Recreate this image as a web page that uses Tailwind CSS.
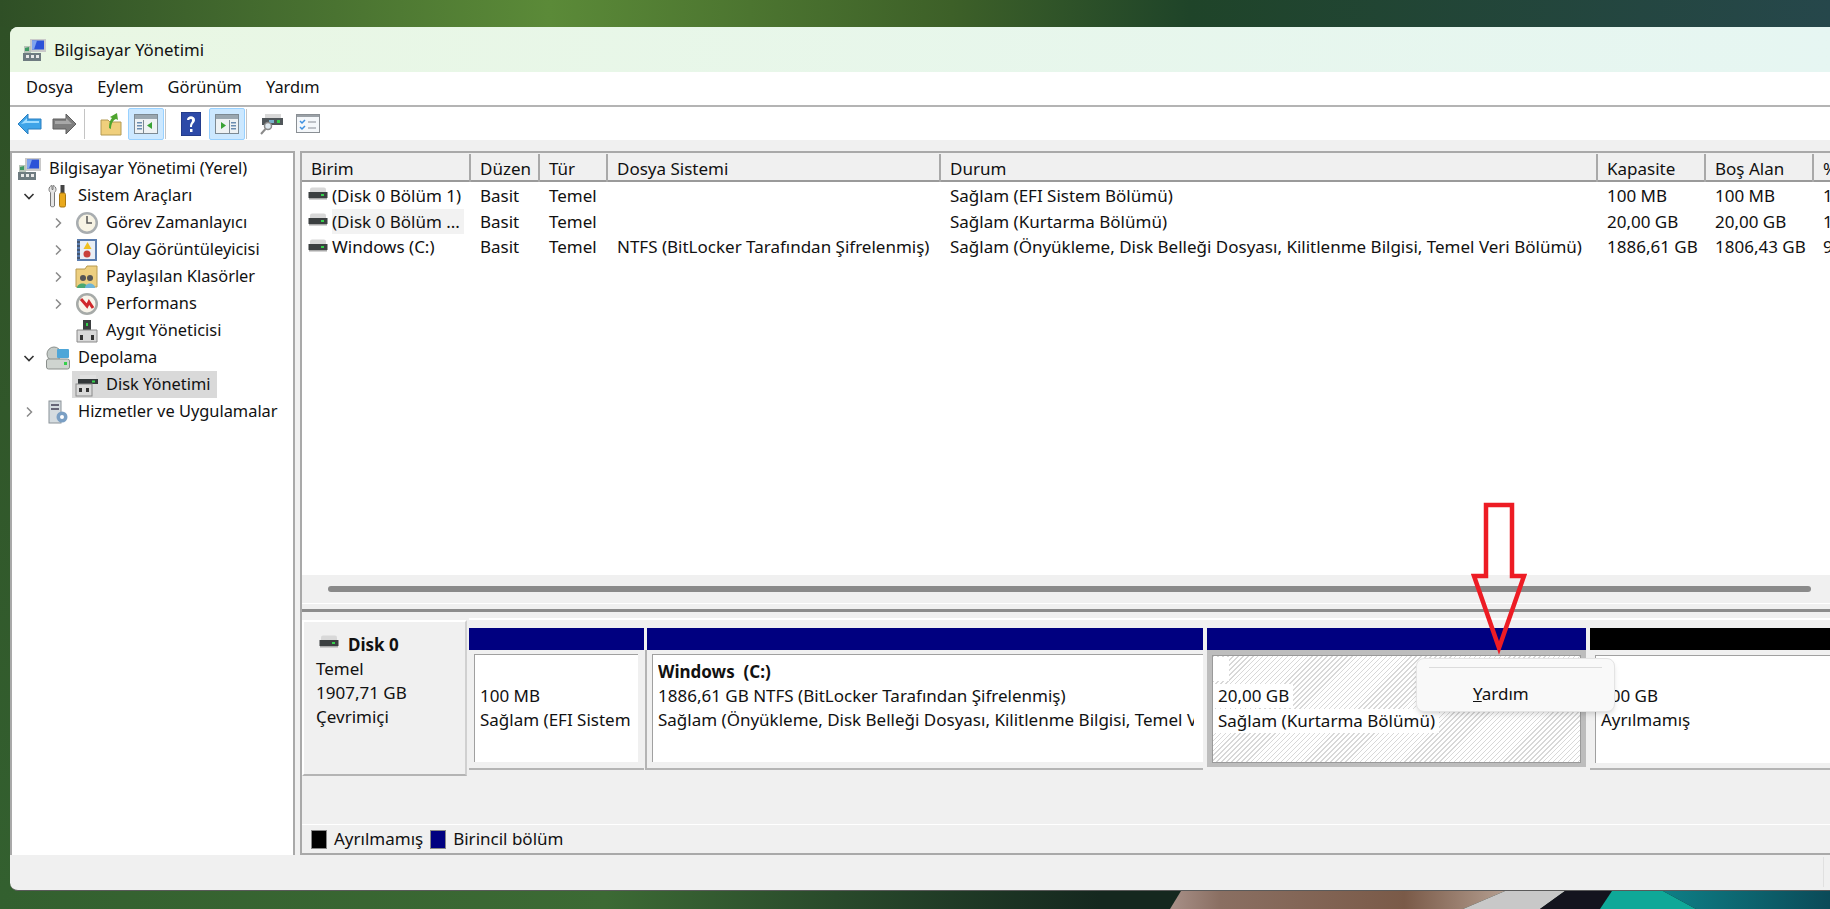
<!DOCTYPE html>
<html lang="tr">
<head>
<meta charset="UTF-8">
<title>Bilgisayar Yönetimi</title>
<script src="https://cdn.jsdelivr.net/npm/@tailwindcss/browser@4"></script>
</head>
<body class="w-[1830px] h-[909px] overflow-hidden font-['Noto_Sans',sans-serif] text-[17px] text-[#111] relative">
<svg class="hidden">
  <symbol id="i-comp" viewBox="0 0 24 24">
    <rect x="8" y="1" width="16" height="13" fill="#c9c9c9"/><rect x="10" y="2.5" width="12" height="9" fill="#2b52d8"/><path d="M10 2.5h5l-3 9h-2z" fill="#7fa3ee"/>
    <path d="M2 8h7v7H2z" fill="#b9c4b9"/><path d="M3 10l4-1v4H3z" fill="#3d9a63"/>
    <rect x="1" y="15" width="18" height="8" fill="#6e7b80"/><rect x="4" y="17" width="3" height="3" fill="#e8e8e8"/><rect x="9" y="17" width="3" height="3" fill="#e8e8e8"/><rect x="14" y="17" width="3" height="3" fill="#e8e8e8"/>
  </symbol>
  <symbol id="i-disk" viewBox="0 0 20 14">
    <path d="M2 2.5Q2 0.5 4 0.5h12q2 0 2 2v3H2z" fill="#d8d8d8"/><rect x="0.5" y="5" width="19" height="6" fill="#3b3f40"/><rect x="13" y="7" width="3" height="2" fill="#35d04c"/><rect x="1" y="11" width="18" height="1.5" fill="#a8a8a8"/>
  </symbol>
  <symbol id="i-diskman" viewBox="0 0 24 24">
    <path d="M5 2h16v5H5z" fill="#e0e0e0"/><rect x="3" y="6" width="20" height="5" fill="#33383a"/><rect x="17" y="7.5" width="3" height="2" fill="#35d04c"/>
    <rect x="1" y="11" width="16" height="12" fill="#d9d9d9" stroke="#8a8a8a"/><rect x="4" y="15" width="3" height="4" fill="#333"/><rect x="11" y="15" width="3" height="4" fill="#333"/>
  </symbol>
  <symbol id="i-chev" viewBox="0 0 12 12"><path d="M4 1.5l4.5 4.5L4 10.5" fill="none" stroke="#8a8a8a" stroke-width="1.5"/></symbol>
  <symbol id="i-chevd" viewBox="0 0 12 12"><path d="M1.5 4l4.5 4.5L10.5 4" fill="none" stroke="#333" stroke-width="1.6"/></symbol>
</svg>

<!-- masaüstü üst -->
<div class="h-[27px] bg-[linear-gradient(90deg,#2f4f26_0,#5b8a38_30%,#3d6028_52%,#1f4429_65%,#26474b_100%)]"></div>

<div class="flex h-[864px] bg-gradient-to-b from-[#2f5026] to-[#33602f]">
  <div class="w-[10px]"></div>
  <!-- pencere -->
  <div class="flex-1 flex flex-col bg-[#f0f0f0] rounded-l-lg overflow-hidden border-b border-[#5a5a5a]">
    <!-- başlık -->
    <div class="h-[45px] flex items-center pl-[12px] bg-gradient-to-r from-[#e9f7e3] to-[#e6f6f2] shrink-0">
      <svg class="w-[24px] h-[24px]"><use href="#i-comp"/></svg>
      <span class="ml-[8px] text-[16.8px]">Bilgisayar Yönetimi</span>
    </div>
    <!-- menü -->
    <div class="h-[35px] flex items-center gap-[24px] pl-[16px] pb-[2px] bg-white border-b-2 border-[#b4b4b4] shrink-0 text-[16.4px]">
      <span>Dosya</span><span>Eylem</span><span>Görünüm</span><span>Yardım</span>
    </div>
    <!-- araç çubuğu -->
    <div class="h-[33px] flex items-center bg-white shrink-0">
      <svg class="ml-[7px] w-[25px] h-[22px]" viewBox="0 0 25 22"><path d="M1 11L11 1v5h13v10H11v5z" fill="#3fa4e8" stroke="#2a7fc0"/><path d="M4 11l6-6v3h12v2H9z" fill="#9fdcff"/></svg>
      <svg class="ml-[10px] w-[25px] h-[22px]" viewBox="0 0 25 22"><path d="M24 11L14 1v5H1v10h13v5z" fill="#7f7f7f" stroke="#5f5f5f"/><path d="M3 8h11V5l6 6H3z" fill="#a8a8a8"/></svg>
      <div class="ml-[7px] w-[1px] h-[30px] bg-[#c4c4c4]"></div>
      <svg class="ml-[15px] w-[22px] h-[24px]" viewBox="0 0 22 24"><path d="M1 8h7l2 2h11v13H1z" fill="#f0cf7c" stroke="#b49a52"/><path d="M9 16c0-5 1-8 3-10l-2-1 7-4 1 7-2-1c-3 1-5 5-5 10z" fill="#4fa52f"/></svg>
      <div class="ml-[6px] w-[36px] h-[32px] bg-[#cce8ff] border border-[#99d1ff] rounded-[2px] flex items-center justify-center">
        <svg class="w-[24px] h-[20px]" viewBox="0 0 24 20"><rect x="0.5" y="0.5" width="23" height="19" fill="#eef2f4" stroke="#7d8a93"/><rect x="1" y="1" width="22" height="4" fill="#9aa7b0"/><rect x="3" y="8" width="5" height="1.5" fill="#6a8cb0"/><rect x="3" y="11" width="5" height="1.5" fill="#6a8cb0"/><rect x="3" y="14" width="5" height="1.5" fill="#6a8cb0"/><path d="M9.5 6v13" stroke="#7d8a93"/><path d="M18 8v7l-5-3.500z" fill="#3aa335"/></svg>
      </div>
      <div class="ml-[1px] w-[1px] h-[30px] bg-[#c4c4c4]"></div>
      <svg class="ml-[15px] w-[20px] h-[24px]" viewBox="0 0 20 24"><rect width="20" height="24" fill="#2d4aa8"/><rect x="0" y="0" width="20" height="24" fill="none" stroke="#1d2f70"/><path d="M6 8c0-5 8-5 8 0 0 3-3 3-3 7H9c0-5 2-4 2-7 0-1.500-2-1.500-3 0zM9 17h2.500v3H9z" fill="#fff"/></svg>
      <div class="ml-[8px] w-[36px] h-[32px] bg-[#cce8ff] border border-[#99d1ff] rounded-[2px] flex items-center justify-center">
        <svg class="w-[24px] h-[20px]" viewBox="0 0 24 20"><rect x="0.5" y="0.5" width="23" height="19" fill="#eef2f4" stroke="#7d8a93"/><rect x="1" y="1" width="22" height="4" fill="#9aa7b0"/><rect x="16" y="8" width="5" height="1.5" fill="#6a8cb0"/><rect x="16" y="11" width="5" height="1.5" fill="#6a8cb0"/><rect x="16" y="14" width="5" height="1.5" fill="#6a8cb0"/><path d="M14.500 6v13" stroke="#7d8a93"/><path d="M6 8v7l5-3.500z" fill="#3aa335"/></svg>
      </div>
      <div class="ml-[1px] w-[1px] h-[30px] bg-[#c4c4c4]"></div>
      <svg class="ml-[13px] w-[24px] h-[22px]" viewBox="0 0 24 22"><path d="M5 1h16v4H5z" fill="#d8d8d8"/><rect x="2" y="5" width="21" height="7" fill="#50565a"/><rect x="17" y="7" width="3" height="3" fill="#35d04c"/><rect x="9" y="7" width="5" height="3" fill="#7ab2cc"/><circle cx="8" cy="13" r="3.500" fill="#dfe9f0" stroke="#8a8a8a" stroke-width="1.500"/><path d="M5.500 16L1 21" stroke="#8a8a8a" stroke-width="2"/></svg>
      <svg class="ml-[12px] w-[24px] h-[19px]" viewBox="0 0 24 19"><rect x="0.500" y="0.500" width="23" height="18" fill="#f4f7fa" stroke="#8a8f94"/><rect x="1" y="1" width="22" height="2" fill="#9aa0a6"/><path d="M4 7l2 2 3-3M4 13l2 2 3-3" fill="none" stroke="#3b8fe0" stroke-width="1.500"/><path d="M12 8h8M12 14h8" stroke="#aab0b6" stroke-width="1.500"/></svg>
    </div>
    <!-- gövde -->
    <div class="flex-1 min-h-0 flex pt-[11px] gap-[5px]">
      <!-- ağaç -->
      <div class="w-[285px] h-[704px] bg-white border-2 border-[#a9a9a9] border-b-0 pt-[2px] shrink-0 text-[16.4px]">
        <div class="h-[27px] flex items-center pl-[5px]"><svg class="w-[24px] h-[24px]"><use href="#i-comp"/></svg><span class="ml-[8px]">Bilgisayar Yönetimi (Yerel)</span></div>
        <div class="h-[27px] flex items-center pl-[11px]"><svg class="w-[12px] h-[12px]"><use href="#i-chevd"/></svg>
          <svg class="ml-[11px] w-[24px] h-[24px]" viewBox="0 0 24 24"><path d="M6 1.500c-2 .5-3 2-3 4 0 1.500 1 2.500 1.500 3V22c0 1 4 1 4 0V8.500c.5-.5 1.500-1.500 1.500-3 0-2-1-3.500-3-4v4H6z" fill="#e4e4e4" stroke="#777"/><rect x="14.500" y="1" width="4" height="8" fill="#444"/><rect x="13.500" y="9" width="6" height="14" rx="1.500" fill="#e9a91c" stroke="#a87710"/></svg>
          <span class="ml-[8px]">Sistem Araçları</span></div>
        <div class="h-[27px] flex items-center pl-[40px]"><svg class="w-[12px] h-[12px]"><use href="#i-chev"/></svg>
          <svg class="ml-[11px] w-[24px] h-[24px]" viewBox="0 0 24 24"><circle cx="12" cy="12" r="11" fill="#a8adb0"/><circle cx="12" cy="12" r="8.500" fill="#f7f3e4"/><path d="M12 5v7h5" fill="none" stroke="#555" stroke-width="1.500"/></svg>
          <span class="ml-[7px]">Görev Zamanlayıcı</span></div>
        <div class="h-[27px] flex items-center pl-[40px]"><svg class="w-[12px] h-[12px]"><use href="#i-chev"/></svg>
          <svg class="ml-[11px] w-[24px] h-[24px]" viewBox="0 0 24 24"><rect x="2" y="1" width="20" height="22" fill="#5a7db0"/><rect x="5" y="3" width="15" height="18" fill="#e9eef5"/><path d="M2 4h3M2 8h3M2 12h3M2 16h3M2 20h3" stroke="#333"/><path d="M12.500 4l4 7h-8z" fill="#f0c020"/><circle cx="12" cy="16" r="3.500" fill="#c8403c"/></svg>
          <span class="ml-[7px]">Olay Görüntüleyicisi</span></div>
        <div class="h-[27px] flex items-center pl-[40px]"><svg class="w-[12px] h-[12px]"><use href="#i-chev"/></svg>
          <svg class="ml-[11px] w-[24px] h-[24px]" viewBox="0 0 24 24"><path d="M1 4h9l2-3h10v21H1z" fill="#edcf80" stroke="#b89a50"/><circle cx="8" cy="13" r="3" fill="#555"/><circle cx="15" cy="13" r="3" fill="#555"/><path d="M2 23c0-6 11-6 11 0z" fill="#4aa873"/><path d="M10 23c0-6 10-6 10 0z" fill="#6fb5d8"/></svg>
          <span class="ml-[7px]">Paylaşılan Klasörler</span></div>
        <div class="h-[27px] flex items-center pl-[40px]"><svg class="w-[12px] h-[12px]"><use href="#i-chev"/></svg>
          <svg class="ml-[11px] w-[24px] h-[24px]" viewBox="0 0 24 24"><circle cx="12" cy="12" r="11" fill="#a6aaa8"/><circle cx="12" cy="12" r="8.500" fill="#f8f4ea"/><path d="M6 7l6 7 2-4 4 6" fill="none" stroke="#d0282c" stroke-width="3"/></svg>
          <span class="ml-[7px]">Performans</span></div>
        <div class="h-[27px] flex items-center pl-[63px]">
          <svg class="w-[24px] h-[24px]" viewBox="0 0 24 24"><rect x="8" y="1" width="8" height="10" fill="#3b3f40"/><rect x="11" y="4" width="2" height="3" fill="#35d04c"/><path d="M2 11h20v12H2z" fill="#d9d9d9" stroke="#8a8a8a"/><rect x="5" y="16" width="3" height="5" fill="#333"/><rect x="16" y="16" width="3" height="5" fill="#333"/></svg>
          <span class="ml-[7px]">Aygıt Yöneticisi</span></div>
        <div class="h-[27px] flex items-center pl-[11px]"><svg class="w-[12px] h-[12px]"><use href="#i-chevd"/></svg>
          <svg class="ml-[11px] w-[24px] h-[24px]" viewBox="0 0 24 24"><circle cx="8" cy="8" r="7" fill="#c4cbc8" stroke="#8a8f8c"/><rect x="11" y="3" width="12" height="9" rx="1" fill="#4ea6d8"/><rect x="0.500" y="13" width="23" height="10" rx="2" fill="#cfd4d0" stroke="#8a8f8c"/><rect x="18" y="16" width="3" height="3" fill="#35d04c"/></svg>
          <span class="ml-[8px]">Depolama</span></div>
        <div class="h-[27px] flex items-center pl-[60px]">
          <div class="h-[27px] flex items-center pl-[3px] pr-[6px] bg-[#d9d9d9]"><svg class="w-[24px] h-[24px]"><use href="#i-diskman"/></svg><span class="ml-[7px]">Disk Yönetimi</span></div></div>
        <div class="h-[27px] flex items-center pl-[11px]"><svg class="w-[12px] h-[12px]"><use href="#i-chev"/></svg>
          <svg class="ml-[11px] w-[24px] h-[24px]" viewBox="0 0 24 24"><rect x="3" y="1" width="12" height="22" fill="#d5dce0" stroke="#8a9298"/><rect x="5" y="4" width="8" height="2" fill="#667"/><rect x="5" y="8" width="8" height="2" fill="#667"/><circle cx="16" cy="17" r="5.500" fill="#7a9fc4"/><circle cx="16" cy="17" r="2" fill="#fff"/></svg>
          <span class="ml-[8px]">Hizmetler ve Uygulamalar</span></div>
      </div>
      <!-- sağ panel -->
      <div class="flex-1 min-w-0 h-[704px] flex flex-col border-l-2 border-t-2 border-[#a9a9a9]">
        <!-- liste -->
        <div class="h-[422px] bg-white shrink-0">
          <div class="h-[29px] grid grid-cols-[169px_69px_68px_333px_657px_108px_108px_16px] bg-[#f0f0f0] border-b-2 border-[#9a9a9a] pt-[1px]">
            <div class="pl-[9px] pt-[2px] border-r-2 border-[#a9a9a9]">Birim</div>
            <div class="pl-[9px] pt-[2px] border-r-2 border-[#a9a9a9]">Düzen</div>
            <div class="pl-[9px] pt-[2px] border-r-2 border-[#a9a9a9]">Tür</div>
            <div class="pl-[9px] pt-[2px] border-r-2 border-[#a9a9a9]">Dosya Sistemi</div>
            <div class="pl-[9px] pt-[2px] border-r-2 border-[#a9a9a9]">Durum</div>
            <div class="pl-[9px] pt-[2px] border-r-2 border-[#a9a9a9]">Kapasite</div>
            <div class="pl-[9px] pt-[2px] border-r-2 border-[#a9a9a9]">Boş Alan</div>
            <div class="pl-[9px] pt-[2px]">%</div>
          </div>
          <div class="mt-[1px] grid grid-cols-[169px_69px_68px_333px_657px_108px_108px_16px] auto-rows-[25.7px] items-center whitespace-nowrap">
            <div class="flex items-center pl-[6px]"><svg class="w-[20px] h-[14px] -mt-[3px]"><use href="#i-disk"/></svg><span class="ml-[4px]">(Disk 0 Bölüm 1)</span></div>
            <div class="pl-[9px]">Basit</div><div class="pl-[9px]">Temel</div><div class="pl-[9px]"></div>
            <div class="pl-[9px]">Sağlam (EFI Sistem Bölümü)</div>
            <div class="pl-[9px]">100 MB</div><div class="pl-[9px]">100 MB</div><div class="pl-[9px] overflow-hidden">1</div>

            <div class="flex items-center pl-[6px]"><svg class="w-[20px] h-[14px] -mt-[3px]"><use href="#i-disk"/></svg><span class="ml-[4px] bg-[#f2f2f2] pr-[4px] leading-[25px]">(Disk 0 Bölüm ...</span></div>
            <div class="pl-[9px]">Basit</div><div class="pl-[9px]">Temel</div><div class="pl-[9px]"></div>
            <div class="pl-[9px]">Sağlam (Kurtarma Bölümü)</div>
            <div class="pl-[9px]">20,00 GB</div><div class="pl-[9px]">20,00 GB</div><div class="pl-[9px] overflow-hidden">1</div>

            <div class="flex items-center pl-[6px]"><svg class="w-[20px] h-[14px] -mt-[3px]"><use href="#i-disk"/></svg><span class="ml-[4px]">Windows (C:)</span></div>
            <div class="pl-[9px]">Basit</div><div class="pl-[9px]">Temel</div>
            <div class="pl-[9px]">NTFS (BitLocker Tarafından Şifrelenmiş)</div>
            <div class="pl-[9px]">Sağlam (Önyükleme, Disk Belleği Dosyası, Kilitlenme Bilgisi, Temel Veri Bölümü)</div>
            <div class="pl-[9px]">1886,61 GB</div><div class="pl-[9px]">1806,43 GB</div><div class="pl-[9px] overflow-hidden">9</div>
          </div>
        </div>
        <!-- kaydırma çubuğu -->
        <div class="h-[28px] flex items-center pl-[26px] pr-[19px] shrink-0">
          <div class="h-[6px] w-full rounded-full bg-[#8a8a8a]"></div>
        </div>
        <div class="h-[9px] border-t border-white border-b-[3px] border-b-[#8c8c8c] shrink-0"></div>
        <!-- disk alanı -->
        <div class="flex-1 min-h-0 flex pt-[8px] items-start overflow-hidden">
          <div class="w-[165px] h-[156px] shrink-0 border-t-2 border-l-2 border-white border-b-2 border-b-[#b4b4b4] border-r-2 border-r-[#d0d0d0] pl-[12px] pt-[11px] leading-[24px]">
            <div class="flex items-center font-bold"><svg class="ml-[3px] w-[20px] h-[14px] -mt-[6px] mr-[9px]"><use href="#i-disk"/></svg>Disk 0</div>
            <div>Temel</div><div>1907,71 GB</div><div>Çevrimiçi</div>
          </div>
          <div class="flex h-[152px] pt-[8px] border-t-2 border-white ml-[2px] -mt-[2px] flex-1 min-w-0 gap-[3px]">
            <div class="w-[175px] shrink-0 flex flex-col">
              <div class="h-[22px] bg-[#000080] shrink-0"></div>
              <div class="h-[120px] pt-[4px] pl-[5px] pr-[6px] border-b-2 border-[#b4b4b4]">
                <div class="h-[108px] bg-white border-l border-t border-[#a0a0a0] pl-[5px] pt-[29px] leading-[24px] whitespace-nowrap overflow-hidden">100 MB<br>Sağlam (EFI Sistem</div>
              </div>
            </div>
            <div class="w-[556px] shrink-0 flex flex-col">
              <div class="h-[22px] bg-[#000080] shrink-0"></div>
              <div class="h-[120px] pt-[4px] pl-[5px] border-b-2 border-l-2 border-[#b4b4b4] -ml-[2px]">
                <div class="h-[108px] bg-white border-l border-t border-[#a0a0a0] pl-[5px] pr-[9px] pt-[5px] leading-[24px]">
                  <div class="whitespace-nowrap overflow-hidden"><b>Windows&nbsp; (C:)</b><br>1886,61 GB NTFS (BitLocker Tarafından Şifrelenmiş)<br>Sağlam (Önyükleme, Disk Belleği Dosyası, Kilitlenme Bilgisi, Temel Veri Bölümü)</div>
                </div>
              </div>
            </div>
            <div class="w-[379px] ml-[1px] shrink-0 flex flex-col">
              <div class="h-[22px] bg-[#000080] shrink-0"></div>
              <div class="h-[117px] bg-[#bdbdbd] px-[5px] pt-[5px]">
                <div class="h-[108px] border border-[#9a9a9a] bg-[repeating-linear-gradient(135deg,#d8d8d8_0,#d8d8d8_1px,#fff_1px,#fff_3.500px)] leading-[24px] whitespace-nowrap">
                  <div class="h-[24px] w-[16px] bg-white mt-[1px]"></div>
                  <div class="h-[3px]"></div>
                  <div class="w-fit bg-white pl-[5px] pr-[4px]">20,00 GB</div>
                  <div class="w-fit bg-white pl-[5px] pr-[4px] mt-[1px]">Sağlam (Kurtarma Bölümü)</div>
                </div>
              </div>
            </div>
            <div class="w-[240px] ml-[1px] shrink-0 flex flex-col">
              <div class="h-[22px] bg-black shrink-0"></div>
              <div class="h-[120px] pt-[5px] pl-[5px] border-b-2 border-[#b4b4b4]">
                <div class="h-[108px] bg-white border-l border-t border-[#a0a0a0] pl-[5px] pt-[28px] leading-[24px] whitespace-nowrap">100 GB<br>Ayrılmamış</div>
              </div>
            </div>
          </div>
        </div>
        <!-- gösterge -->
        <div class="h-[31px] shrink-0 border-t border-white border-b-2 border-b-[#a9a9a9] flex items-center pl-[9px]">
          <span class="w-[16px] h-[19px] bg-black border border-[#888]"></span><span class="ml-[7px]">Ayrılmamış</span>
          <span class="ml-[7px] w-[16px] h-[19px] bg-[#000080] border border-[#888]"></span><span class="ml-[7px]">Birincil bölüm</span>
        </div>
      </div>
    </div>
    <!-- durum çubuğu -->
    <div class="h-[36px] shrink-0 flex justify-end pr-[6px] py-[3px]"><div class="w-[1px] bg-[#e0e0e0]"></div></div>
  </div>
</div>

<!-- masaüstü alt -->
<div class="h-[18px] flex">
  <div class="w-[1100px] bg-gradient-to-r from-[#33602f] via-[#3c6a34] via-55% to-[#15281f]"></div>
  <svg class="w-[730px] h-[18px]" viewBox="0 0 730 18">
    <defs><linearGradient id="kahve" x1="0" x2="1"><stop offset="0" stop-color="#a89088"/><stop offset="0.15" stop-color="#8a6f62"/><stop offset="0.7" stop-color="#7a5a48"/><stop offset="1" stop-color="#b49e90"/></linearGradient>
    <linearGradient id="camgobegi" x1="0" x2="1"><stop offset="0" stop-color="#0e7f86"/><stop offset="1" stop-color="#0b4a58"/></linearGradient></defs>
    <rect width="730" height="18" fill="#15281f"/>
    <path d="M81 0H405L363 18H70Z" fill="url(#kahve)"/>
    <path d="M405 0H465L440 18H363Z" fill="#c8c8c8"/>
    <path d="M465 0H512L500 18H440Z" fill="#14141e"/>
    <path d="M512 0H563L596 18H500Z" fill="#0fa898"/>
    <path d="M563 0H730V18H596Z" fill="url(#camgobegi)"/>
  </svg>
</div>

<!-- bağlam menüsü -->
<div class="absolute left-[1416px] top-[658px] w-[199px] h-[54px] bg-[#f9f9f9] rounded-lg border border-[#e4e4e4] shadow-md">
  <div class="mx-[12px] mt-[8px] h-[1px] bg-[#dcdcdc]"></div>
  <div class="pl-[56px] mt-[14px] leading-[24px]"><u>Y</u>ardım</div>
</div>
<!-- kırmızı ok -->
<svg class="absolute left-[1465px] top-[498px] w-[68px] h-[158px]" viewBox="0 0 68 158"><path d="M21 7H47V78H59L34 150L9 78H21Z" fill="none" stroke="#ed1c24" stroke-width="4.500"/></svg>
</body>
</html>
